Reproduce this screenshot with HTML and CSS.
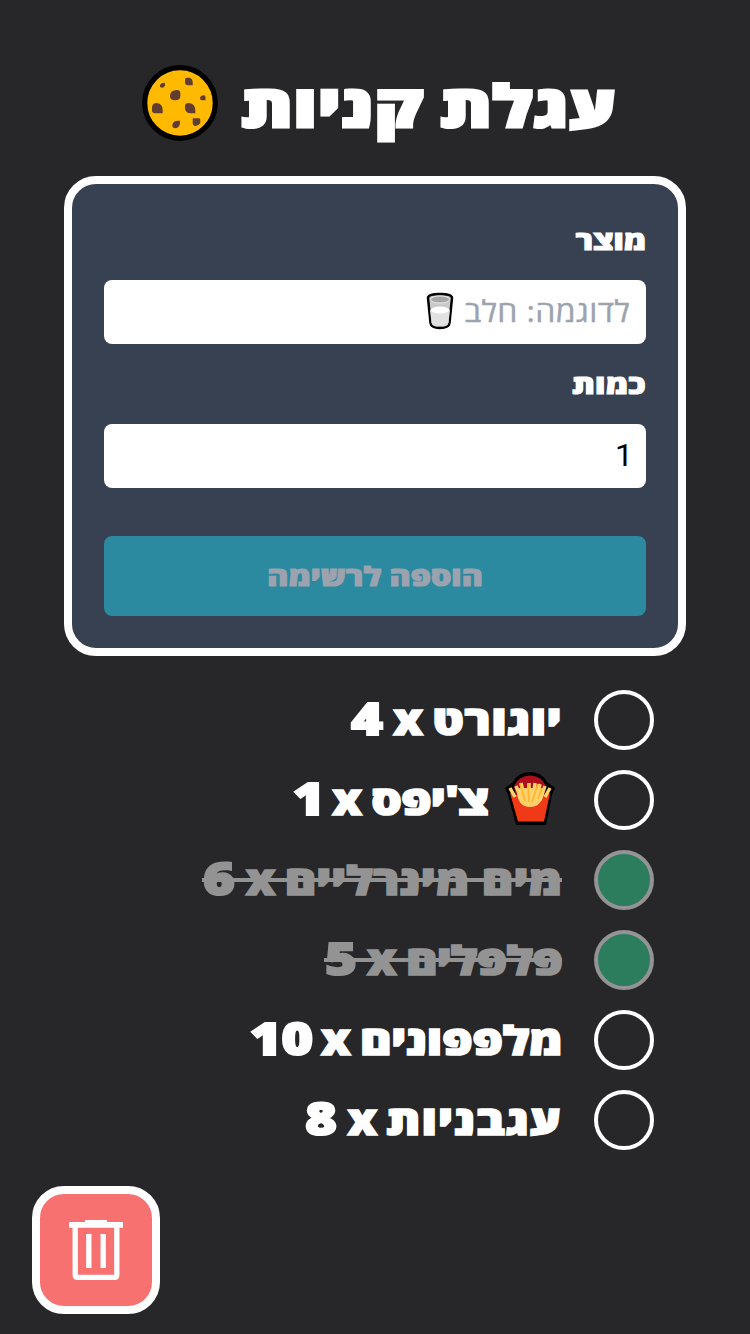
FILE: index.html
```html
<!DOCTYPE html>
<html lang="he" dir="rtl">
<head>
<meta charset="utf-8">
<title>עגלת קניות</title>
<link rel="stylesheet" href="styles.css">
</head>
<body>
<main class="page">
  <header class="header">
    <h1 class="title"><span class="text">עגלת קניות</span></h1>
    <svg class="cookie" viewBox="0 0 76 76" aria-hidden="true">
      <circle cx="38" cy="38" r="35.300" fill="#ffba00" stroke="#000" stroke-width="5.200"/>
      <g fill="#603c31">
        <path d="M43 15Q43 12.700 45 12.700H48Q50.700 14 50.700 17V20.300H45.500Q43 20 43 17.500z"/>
        <path d="M18 20Q19 17.700 23 17.700V20.500Q22 22.700 20 22.700L18 22z"/>
        <path d="M28 31Q28 25 35 25Q38.300 25 38.300 28V31Q38.300 35.300 33 35.300Q28 35.300 28 31z"/>
        <path d="M58 33Q58.500 30.300 62 30.300Q63.500 30.300 63.500 32V35.300H60Q58 35.300 58 33z"/>
        <path d="M10 42Q10.500 38 15 38Q20.700 39 20.700 45V48.300H13Q10 48.300 10 45z"/>
        <path d="M43 41Q43 38 47 38Q53.300 39 53.300 45V48.300H48Q43 47.500 43 43z"/>
        <path d="M30.300 60Q31 55.700 36 55.700H38V58.500Q37 63.300 33 63.300Q30.300 63 30.300 61z"/>
        <path d="M50.700 53.300H57Q58.300 53.300 58.300 55V58Q56.500 61 53.500 61Q50.700 60.500 50.700 58z"/>
      </g>
    </svg>
  </header>
  <form class="card">
    <label class="label" for="product"><span class="text">מוצר</span></label>
    <div class="field" id="product">
      <span class="placeholder">לדוגמה: חלב</span>
      <svg class="milk" viewBox="0 0 28 38" aria-hidden="true">
        <path d="M2 6q0-4 12-4t12 4l-2.500 25q-.5 5-9.500 5t-9.500-5z" fill="#c9c9c9" stroke="#000" stroke-width="2.500"/>
        <path d="M4 18q10-5 20 0l-1.500 13q-.5 3-8.500 3t-8.500-3z" fill="#e2e2e2"/>
        <ellipse cx="14" cy="18" rx="9.200" ry="3.500" fill="#fff"/>
        <ellipse cx="14" cy="7.500" rx="9.500" ry="3.500" fill="#a5a5a5" stroke="#e8e8e8"/>
      </svg>
    </div>
    <label class="label" for="amount"><span class="text label-amount">כמות</span></label>
    <div class="field field-amount" id="amount"><span class="amount">1</span></div>
    <button class="submit" type="button" disabled><span class="text">הוספה לרשימה</span></button>
  </form>
  <ul class="list">
    <li class="item"><span class="check"></span><span class="name"><span class="text yogurt">יוגורט</span><span class="times">x</span><span class="count">4</span></span></li>
    <li class="item"><span class="check"></span>
      <svg class="fries" viewBox="0 0 52 54" aria-hidden="true">
        <path d="M1 16L9 10Q14 0 26 0T43 10L51 16L48 23L42 53H12L4 23z" fill="#000"/>
        <path d="M10 14Q15 3.500 26 3.500T42 14L40 27H12z" fill="#ae0f1b"/>
        <path d="M6 21L10 23H42L46 21L40 49.500H14z" fill="#f03a17"/>
        <path d="M13 20Q14 35 26 35T40 20L37 16H15z" fill="#ffcf6b"/>
        <path d="M6 16l5 9M46 16l-5 9M12 14l6 15M17 11l4 18M25 11v19M31 11l-2 18M36 12l-4 16M41 14l-5 14" fill="none" stroke="#ffd36e" stroke-width="3.500"/>
        <path d="M16 11l5 18M24 11l1 19M34 12l-6 18M38 16l-4 11" stroke="#ffb62f" stroke-width="1.800"/>
      </svg>
      <span class="name"><span class="text chips">צ'יפס</span><span class="times">x</span><span class="count count-one">1</span></span></li>
    <li class="item done"><span class="check"></span><span class="name"><span class="text water">מים מינרליים</span><span class="times">x</span><span class="count">6</span></span></li>
    <li class="item done"><span class="check"></span><span class="name"><span class="text peppers">פלפלים</span><span class="times">x</span><span class="count">5</span></span></li>
    <li class="item"><span class="check"></span><span class="name"><span class="text cucumbers">מלפפונים</span><span class="times">x</span><span class="count count-ten">10</span></span></li>
    <li class="item"><span class="check"></span><span class="name"><span class="text tomatoes">עגבניות</span><span class="times">x</span><span class="count">8</span></span></li>
  </ul>
  <button class="trash" type="button" aria-label="מחיקה">
    <svg class="trash-icon" viewBox="0 0 54 60" aria-hidden="true">
      <path d="M0 2h16V0h22v2h16v5.700H0z" fill="#fff"/>
      <path d="M6.200 6V55q0 2.300 2.300 2.300h37q2.300 0 2.300-2.300V6M19.800 14v34M34.200 14v34" fill="none" stroke="#fff" stroke-width="5.300"/>
    </svg>
  </button>
</main>
</body>
</html>
```
FILE: styles.css
```css
* { box-sizing: border-box; }
body {
  margin: 0;
  background: #27272a;
  color: #fff;
  font-family: "Open Sans", "Noto Sans", "DejaVu Sans", sans-serif;
}
.page { height: 1334px; padding: 56px 64px 20px; display: flex; flex-direction: column; overflow: hidden; }

/* Heavy, squat display lettering */
.text {
  display: inline-block;
  white-space: nowrap;
  line-height: 1.25;
  font-weight: 800;
  -webkit-text-stroke: 0.042em currentColor;
  transform: translateY(-0.073em) scaleY(0.83);
  transform-origin: 50% 1.013em;
}
.header { height: 96px; display: flex; align-items: center; padding-right: 69px; gap: 24px; }
.title { margin: 0; font-size: 72px; line-height: 96px; letter-spacing: 1.300px; word-spacing: -4px; }
.title .text { -webkit-text-stroke-width: 0.056em; transform: translateY(-0.073em) scaleY(0.8); }
.cookie { width: 76px; height: 76px; margin-bottom: 3px; }
.card {
  height: 480px;
  margin-top: 24px;
  padding: 32px;
  border: 8px solid #fff;
  border-radius: 32px;
  background: #374151;
  display: flex;
  flex-direction: column;
}
.label { height: 48px; margin-bottom: 16px; font-size: 32px; display: flex; align-items: center; }
.label-amount { letter-spacing: 0.4px; }
.field { height: 64px; margin-bottom: 16px; padding: 0 16px; border-radius: 8px; background: #fff; display: flex; align-items: center; gap: 10px; }
.field-amount { margin-bottom: 48px; padding-right: 13px; }
.placeholder { color: #9ca3af; font-size: 32px; line-height: 64px; letter-spacing: 0.35px; -webkit-text-stroke: 0.4px currentColor; transform: translateY(-1px) scaleY(0.92); }
.amount { color: #000; font-size: 32px; line-height: 64px; font-family: Roboto, sans-serif; transform: translateY(-1px); }
.milk { width: 28px; height: 38px; margin-bottom: 2px; }
.submit { height: 80px; padding: 0 0 2px; border: 0; border-radius: 8px; background: #2b8a9f; color: #9ca3af; font: 32px "Open Sans", sans-serif; }
.list { list-style: none; margin: 34px 0 0; padding: 0 32px; display: flex; flex-direction: column; gap: 20px; }
.item { height: 60px; display: flex; align-items: center; font-size: 48px; line-height: 60px; }
.check { flex: none; width: 60px; height: 60px; border: 4px solid #fff; border-radius: 50%; margin-left: 32px; }
.name { position: relative; display: flex; align-items: center; gap: 9px; }
.times, .count { font-weight: 800; transform-origin: 50% 48.600px; }
.times { -webkit-text-stroke: 0.03em currentColor; transform: translateY(-3.300px) scaleY(0.91); }
.count { width: 34px; text-align: center; -webkit-text-stroke: 0.05em currentColor; transform: translateY(-3.500px) scale(1.12, 0.91); }
.count-one { width: 24px; }
.count-ten { width: 61px; }
.yogurt { letter-spacing: 0.5px; }
.chips { letter-spacing: -0.8px; }
.water { letter-spacing: 0.1px; }
.peppers { letter-spacing: -0.8px; }
.cucumbers { letter-spacing: -0.3px; }
.tomatoes { letter-spacing: 1.200px; }
.done { color: #939394; }
.done .check { border-color: #939394; background: #2c7d5e; }
/* One continuous strike across the name and the count */
.done .name::after { content: ""; position: absolute; top: 28px; left: 0; right: 0; height: 4px; background: currentColor; }
.fries { width: 52px; height: 54px; margin: 0 6px 3px 16px; }
.trash { width: 128px; height: 128px; margin: auto auto 0 -32px; padding: 0; border: 8px solid #fff; border-radius: 32px; background: #f87171; display: grid; place-items: center; }
.trash-icon { width: 54px; height: 60px; }
```
